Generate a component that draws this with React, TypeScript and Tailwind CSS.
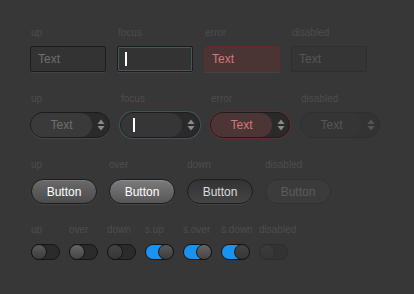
import React from "react";

const font = { fontFamily: '"Liberation Sans", Arial, sans-serif' };

function Label({ children }: { children: React.ReactNode }) {
  return <div className="h-[12px] text-[10px] leading-[12px] text-[#4d4d4d]">{children}</div>;
}

function Caret() {
  return <div className="h-[14px] w-[2px] bg-white" />;
}

function TextInput({ state }: { state: "up" | "focus" | "error" | "disabled" }) {
  const cls = {
    up: "border-[#1c1c1c] bg-[#333333] text-[#6f6f6f] shadow-[0_1px_0_#444]",
    focus: "border-[#1c1c1c] bg-[#333333] shadow-[inset_0_0_0_1px_#44575c,0_1px_0_#444]",
    error: "border-[#5e2a2a] bg-[#4a3434] text-[#d07a7a] shadow-[0_1px_0_#444]",
    disabled: "border-[#2e2e2e] bg-[#353535] text-[#555555]",
  }[state];
  return (
    <div className={`flex h-[26px] w-[76px] items-center rounded-[2px] border px-[7px] text-[12px] ${cls}`}>
      {state === "focus" ? <Caret /> : "Text"}
    </div>
  );
}

function Arrows({ color }: { color: string }) {
  return (
    <svg width="8" height="12" viewBox="0 0 8 12">
      <path d="M4 0.5 L7.5 5 H0.5 Z" fill={color} />
      <path d="M4 11.5 L7.5 7 H0.5 Z" fill={color} />
    </svg>
  );
}

function Spinner({ state }: { state: "up" | "focus" | "error" | "disabled" }) {
  const outer = {
    up: "border-[#1c1c1c] bg-[#2a2a2a] shadow-[0_1px_0_#444]",
    focus: "border-[#1c1c1c] bg-[#2a2a2a] shadow-[0_0_0_1px_#3e5459,0_1px_0_#444]",
    error: "border-[#1c1c1c] bg-[#2a2a2a] shadow-[0_0_0_1px_#5a3030,0_1px_0_#444]",
    disabled: "border-[#2f2f2f] bg-[#333333]",
  }[state];
  const inner = {
    up: "bg-[#3a3a3a] text-[#6f6f6f]",
    focus: "bg-[#363636]",
    error: "bg-[#4d3535] text-[#d07a7a]",
    disabled: "bg-[#353535] text-[#555555]",
  }[state];
  return (
    <div className={`flex h-[26px] w-[80px] items-center rounded-full border ${outer}`}>
      <div className={`flex h-full w-[61px] items-center justify-center rounded-full text-[12px] ${inner}`}>
        {state === "focus" ? <div className="mr-auto ml-[12px]"><Caret /></div> : "Text"}
      </div>
      <div className="flex flex-1 items-center justify-center">
        <Arrows color={state === "disabled" ? "#555" : "#8a8a8a"} />
      </div>
    </div>
  );
}

function Button({ state }: { state: "up" | "over" | "down" | "disabled" }) {
  const cls = {
    up: "border-[#1c1c1c] bg-gradient-to-b from-[#6a6a6a] to-[#4b4b4b] text-white shadow-[inset_0_1px_0_#7a7a7a,0_1px_0_#444]",
    over: "border-[#1c1c1c] bg-gradient-to-b from-[#7b7b7b] to-[#575757] text-white shadow-[inset_0_1px_0_#8c8c8c,0_1px_0_#444]",
    down: "border-[#1c1c1c] bg-gradient-to-b from-[#333333] to-[#444444] text-[#dddddd] shadow-[0_1px_0_#444]",
    disabled: "border-[#313131] bg-[#3b3b3b] text-[#5c5c5c]",
  }[state];
  return (
    <div className={`flex h-[25px] w-[66px] items-center justify-center rounded-full border text-[12px] ${cls}`}>
      Button
    </div>
  );
}

function Toggle({ state }: { state: "up" | "over" | "down" | "sup" | "sover" | "sdown" | "disabled" }) {
  const selected = state === "sup" || state === "sover" || state === "sdown";
  const disabled = state === "disabled";
  const knob = {
    up: "from-[#5a5a5a] to-[#3c3c3c]",
    over: "from-[#666666] to-[#454545]",
    down: "from-[#444444] to-[#363636]",
    sup: "from-[#5a5a5a] to-[#3c3c3c]",
    sover: "from-[#666666] to-[#454545]",
    sdown: "from-[#444444] to-[#363636]",
    disabled: "from-[#3b3b3b] to-[#353535]",
  }[state];
  return (
    <div
      className={`flex h-[16px] w-[29px] items-center rounded-full border ${
        disabled ? "border-[#2e2e2e] bg-[#333333]" : "border-[#161616] bg-[#2b2b2b]"
      } ${selected ? "justify-end" : "justify-start"}`}
    >
      {selected && <div className="h-full flex-1 -mr-[8px] rounded-l-full bg-[#1a92f0]" />}
      <div
        className={`z-10 h-[16px] w-[16px] -my-px rounded-full border bg-gradient-to-b ${knob} ${
          disabled ? "border-[#2e2e2e]" : "border-[#161616]"
        } ${selected ? "-mr-px" : "-ml-px"}`}
      />
    </div>
  );
}

export default function App() {
  return (
    <div className="h-[294px] w-[414px] bg-[#373737] pl-[30px] pt-[27px]" style={font}>
      <div className="flex gap-[11px]">
        {(["up", "focus", "error", "disabled"] as const).map((s) => (
          <div key={s} className="flex w-[76px] flex-col gap-[7px]">
            <div className="pl-px"><Label>{s}</Label></div>
            <TextInput state={s} />
          </div>
        ))}
      </div>

      <div className="mt-[21px] flex gap-[10px]">
        {(["up", "focus", "error", "disabled"] as const).map((s) => (
          <div key={s} className="flex w-[80px] flex-col gap-[7px]">
            <div className="pl-px"><Label>{s}</Label></div>
            <Spinner state={s} />
          </div>
        ))}
      </div>

      <div className="mt-[21px] flex gap-[12px] pl-px">
        {(["up", "over", "down", "disabled"] as const).map((s) => (
          <div key={s} className="flex w-[66px] flex-col gap-[8px]">
            <Label>{s}</Label>
            <Button state={s} />
          </div>
        ))}
      </div>

      <div className="mt-[20px] flex gap-[9px] pl-px">
        {([
          ["up", "up"],
          ["over", "over"],
          ["down", "down"],
          ["sup", "s.up"],
          ["sover", "s.over"],
          ["sdown", "s.down"],
          ["disabled", "disabled"],
        ] as const).map(([s, l]) => (
          <div key={s} className="flex w-[29px] flex-col gap-[8px] whitespace-nowrap">
            <Label>{l}</Label>
            <Toggle state={s} />
          </div>
        ))}
      </div>
    </div>
  );
}
